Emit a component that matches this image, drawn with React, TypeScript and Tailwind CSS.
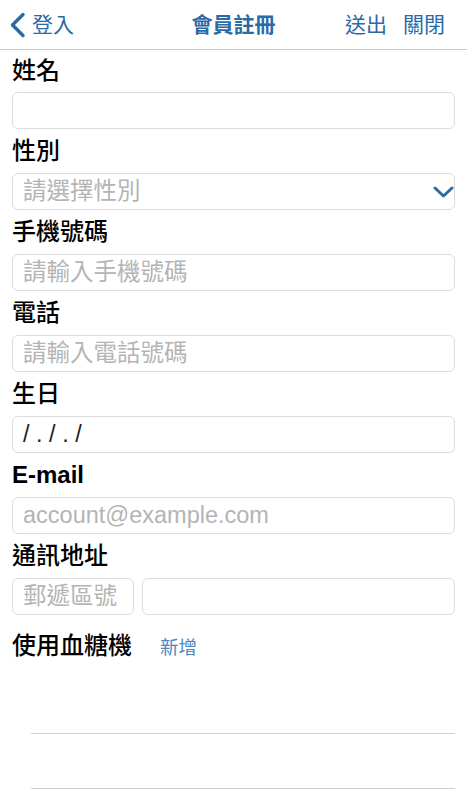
const font = "font-['Liberation_Sans','Noto_Sans_CJK_TC',sans-serif]";

const Field = ({
  label,
  children,
  first,
  latin,
}: {
  label: string;
  children: React.ReactNode;
  first?: boolean;
  latin?: boolean;
}) => (
  <div>
    <div
      className={`${first ? "h-[42px]" : "h-[44px]"} flex items-center text-[24px] ${
        latin ? "font-bold text-[23px]" : "font-medium"
      } text-black`}
    >
      {label}
    </div>
    {children}
  </div>
);

const Box = ({ text, placeholder, className = "" }: { text?: string; placeholder?: string; className?: string }) => (
  <div
    className={`h-[37px] flex items-center px-[10px] rounded-[6px] border border-[#dcdcdc] text-[23.5px] ${
      text ? "text-[#222]" : "text-[#b4b4b4]"
    } ${className}`}
  >
    {text ?? placeholder}
  </div>
);

export default function App() {
  return (
    <div className={`w-[467px] h-[800px] bg-white overflow-hidden ${font}`}>
      {/* nav bar */}
      <div className="h-[50px] border-b border-[#c8c8c8] flex items-center relative text-[#2a6aa5] text-[21px]">
        <div className="flex items-center pl-[9px]">
          <svg width="18" height="26" viewBox="0 0 18 26" className="mr-[5px]">
            <path d="M14 2.5 L3.5 13 L14 23.5" fill="none" stroke="#2a6aa5" strokeWidth="3.4" strokeLinecap="round" strokeLinejoin="round" />
          </svg>
          <span>登入</span>
        </div>
        <div className="absolute left-0 right-0 text-center font-bold pointer-events-none">會員註冊</div>
        <div className="ml-auto flex items-center gap-[16px] pr-[22px]">
          <span>送出</span>
          <span>關閉</span>
        </div>
      </div>

      <div className="px-[12px]">
        <Field label="姓名" first>
          <Box />
        </Field>
        <Field label="性別">
          <div className="h-[37px] flex items-center pl-[10px] pr-0 rounded-[6px] border border-[#dcdcdc] text-[23.5px] text-[#b4b4b4]">
            <span className="flex-1">請選擇性別</span>
            <svg width="22" height="14" viewBox="0 0 22 14">
              <path d="M3 3 L11.5 11 L20 3" fill="none" stroke="#2a6aa5" strokeWidth="3" strokeLinecap="round" strokeLinejoin="round" />
            </svg>
          </div>
        </Field>
        <Field label="手機號碼">
          <Box placeholder="請輸入手機號碼" />
        </Field>
        <Field label="電話">
          <Box placeholder="請輸入電話號碼" />
        </Field>
        <Field label="生日">
          <Box text="/ . / . /" className="font-light" />
        </Field>
        <Field label="E-mail" latin>
          <Box placeholder="account@example.com" />
        </Field>
        <Field label="通訊地址">
          <div className="flex gap-[8px]">
            <Box placeholder="郵遞區號" className="w-[122px]" />
            <Box className="flex-1" />
          </div>
        </Field>

        <div className="mt-[12px] h-[38px] flex items-center">
          <span className="text-[24px] font-medium text-black">使用血糖機</span>
          <span className="ml-[28px] mt-[3px] text-[18.5px] text-[#4a86bf]">新增</span>
        </div>
        <div className="ml-[19px] h-[69px] border-b border-[#d0d0d0]" />
        <div className="ml-[19px] h-[55px] border-b border-[#d0d0d0]" />
      </div>
    </div>
  );
}
